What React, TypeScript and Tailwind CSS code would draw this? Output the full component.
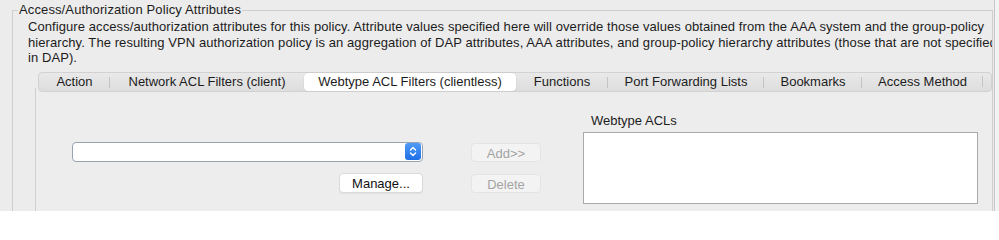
import React from 'react';

const tabs = [
  { label: 'Action', w: 'w-[71px]', sep: false },
  { label: 'Network ACL Filters (client)', w: 'w-[194px]', sep: true },
  { label: 'Webtype ACL Filters (clientless)', w: 'w-[212px]', sep: false, active: true },
  { label: 'Functions', w: 'w-[92px]', sep: false },
  { label: 'Port Forwarding Lists', w: 'w-[156px]', sep: true },
  { label: 'Bookmarks', w: 'w-[98px]', sep: true },
  { label: 'Access Method', w: 'w-[121px]', sep: true },
];

function Stepper() {
  return (
    <div className="w-[16px] h-[17px] rounded-[3px] bg-gradient-to-b from-[#4f9bf7] to-[#1d6fe6] flex items-center justify-center">
      <svg width="8" height="11" viewBox="0 0 8 11" fill="none" stroke="white" strokeWidth="1.4" strokeLinecap="round" strokeLinejoin="round">
        <path d="M1.5 4 L4 1.5 L6.5 4" />
        <path d="M1.5 7 L4 9.5 L6.5 7" />
      </svg>
    </div>
  );
}

export default function App() {
  return (
    <div
      className="w-[999px] h-[211px] bg-[#ececec] flex overflow-hidden text-[13px] text-[#1c1c1c]"
      style={{ fontFamily: '"Liberation Sans", Arial, sans-serif' }}
    >
      <fieldset className="ml-[12px] mt-[2px] w-[982px] h-[230px] border border-[#cfcfcf] min-w-0">
        <legend className="ml-[5px] px-[1px] leading-[16px] tracking-[0.12px] text-[#1c1c1c]">
          Access/Authorization Policy Attributes
        </legend>

        {/* description */}
        <div className="pl-[15px] pt-[1px] leading-[15.5px] tracking-[0.08px] whitespace-nowrap overflow-hidden">
          Configure access/authorization attributes for this policy. Attribute values specified here will override those values obtained from the AAA system and the group-policy
          <br />
          hierarchy. The resulting VPN authorization policy is an aggregation of DAP attributes, AAA attributes, and group-policy hierarchy attributes (those that are not specified
          <br />
          in DAP).
        </div>

        {/* tabbed pane */}
        <div className="ml-[22px] mt-[6px] flex flex-col">
          <div className="relative z-10 ml-[3px] h-[20px] flex items-center rounded-[4px] border border-[#d2d2d2] bg-gradient-to-b from-[#e9e9e9] to-[#dddddd]">
            {tabs.map((t) =>
              t.active ? (
                <div
                  key={t.label}
                  className={`${t.w} h-[18px] flex items-center justify-center rounded-[4px] bg-white shadow-[0_0_1px_rgba(0,0,0,0.25)]`}
                >
                  {t.label}
                </div>
              ) : (
                <div key={t.label} className={`${t.w} h-[18px] flex items-center justify-center relative`}>
                  {t.label}
                  {t.sep && <span className="absolute left-[-1px] top-[4px] h-[11px] w-px bg-[#c4c4c4]" />}
                </div>
              )
            )}
            <span className="ml-[-1px] h-[11px] w-px bg-[#c4c4c4]" />
          </div>

          <div className="-mt-[4px] h-[130px] border-l border-[#d0d0d0] bg-[#ededed] flex items-start pl-[36px]">
            {/* combo + manage */}
            <div className="w-[351px] pt-[54px] flex flex-col items-end">
              <div className="w-[351px] h-[20px] rounded-[4px] border border-[#9aa3b2] bg-white flex items-center justify-end pr-[1px]">
                <Stepper />
              </div>
              <button className="mt-[11px] w-[84px] h-[20px] rounded-[4px] bg-white border border-[#dadada] shadow-[0_1px_1px_rgba(0,0,0,0.06)] text-[#111]">
                Manage...
              </button>
            </div>

            {/* add / delete */}
            <div className="ml-[48px] w-[70px] pt-[55px] flex flex-col">
              <button className="h-[19px] rounded-[4px] bg-[#f3f3f3] border border-[#e4e4e4] text-[#a3a3a3]">
                Add&gt;&gt;
              </button>
              <button className="mt-[12px] h-[19px] rounded-[4px] bg-[#f3f3f3] border border-[#e4e4e4] text-[#a3a3a3]">
                Delete
              </button>
            </div>

            {/* list */}
            <div className="ml-[42px] w-[395px] pt-[25px] flex flex-col">
              <div className="pl-[8px] h-[16px] leading-[16px] mb-[3px]">Webtype ACLs</div>
              <div className="h-[72px] border border-[#a9a9a9] bg-white" />
            </div>
          </div>
        </div>
      </fieldset>
      <div className="ml-[1px] w-[5px] h-full bg-[#f3f3f3] border-l border-[#c6c6c6]" />
    </div>
  );
}
